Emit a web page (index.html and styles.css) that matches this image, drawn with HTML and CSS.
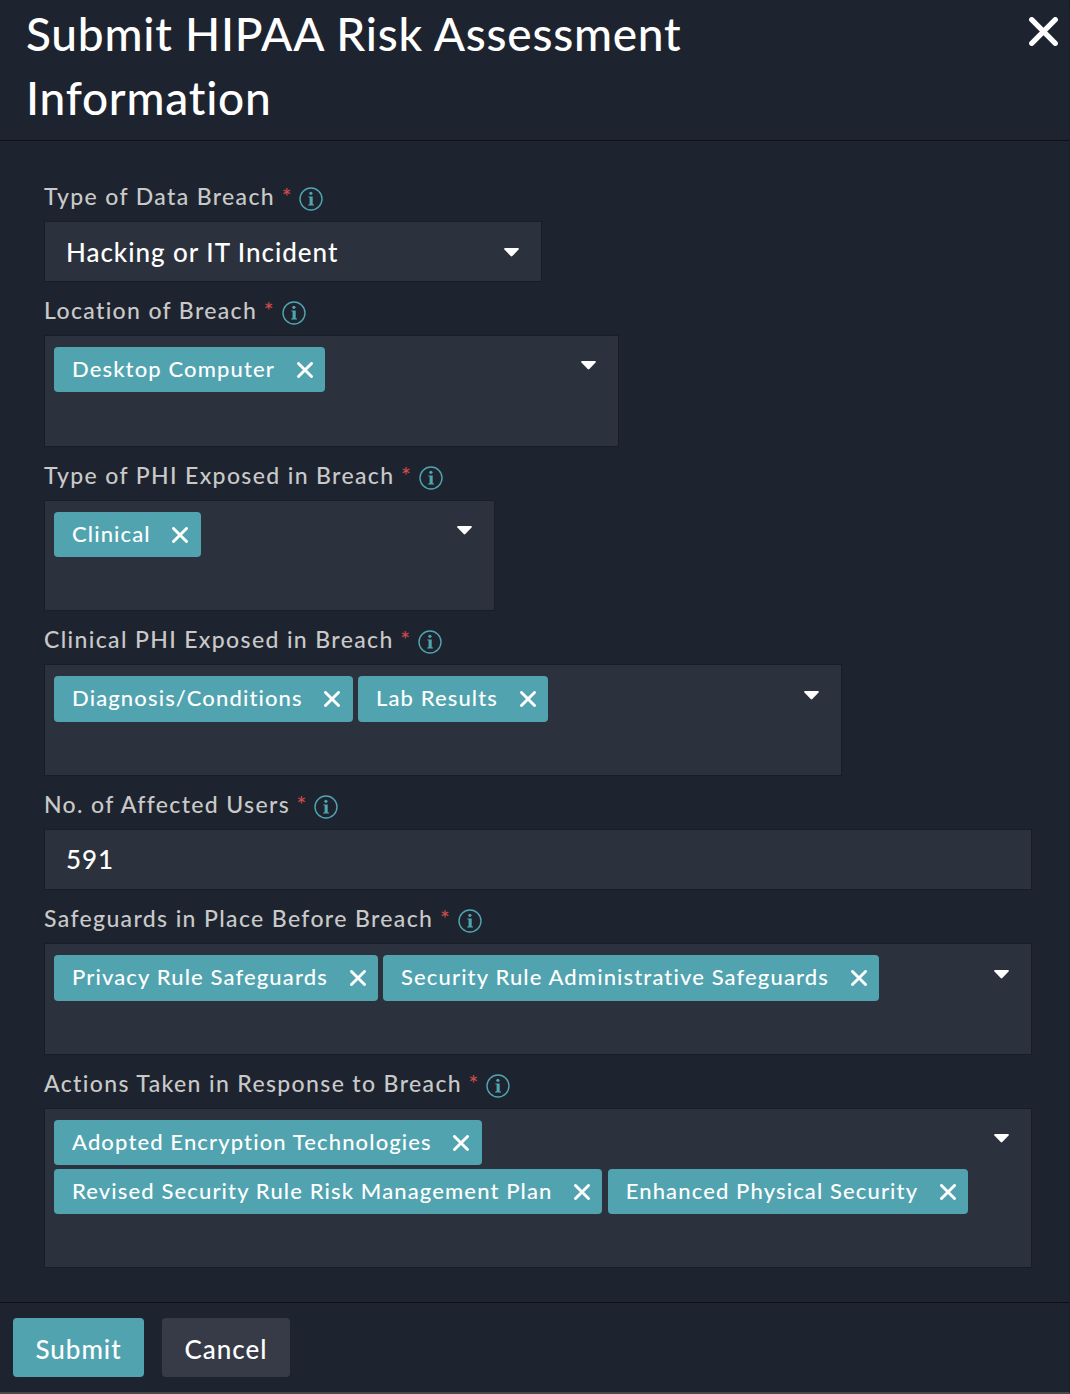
FILE: index.html
```html
<!DOCTYPE html>
<html lang="en">
<head>
<meta charset="utf-8">
<title>Submit HIPAA Risk Assessment Information</title>
<link rel="stylesheet" href="styles.css">
</head>
<body>
<svg class="sprite" aria-hidden="true">
  <symbol id="info" viewBox="0 0 24 24">
    <circle cx="12" cy="12" r="11" fill="none" stroke="currentColor" stroke-width="1.4"/>
    <circle cx="11.9" cy="6.3" r="1.6" fill="currentColor"/>
    <path fill="currentColor" d="M9.2 9.5h4.5v7.8l1.3.3v.8H9.2v-.8l1.4-.3v-6.7l-1.4-.3z"/>
  </symbol>
  <symbol id="cross" viewBox="0 0 16 16">
    <path d="M1.5 1.5 14.5 14.5M14.5 1.5 1.5 14.5" fill="none" stroke="currentColor" stroke-width="2.9" stroke-linecap="round"/>
  </symbol>
  <symbol id="caret" viewBox="0 0 15 9">
    <path fill="currentColor" d="M.8 0h13.4q1.2.6.4 1.5L8.3 8.1q-.8.8-1.6 0L.4 1.5Q-.4.6.8 0z"/>
  </symbol>
</svg>
<div class="dialog">
  <header class="header">
    <h1 class="title">Submit HIPAA Risk Assessment Information</h1>
    <svg class="close"><use href="#cross"/></svg>
  </header>
  <main class="form">
    <div class="field">
      <div class="label"><span>Type of Data Breach</span><span class="req">*</span><svg class="info"><use href="#info"/></svg></div>
      <div class="box single select w-breach"><span class="value">Hacking or IT Incident</span><svg class="caret"><use href="#caret"/></svg></div>
    </div>
    <div class="field">
      <div class="label"><span>Location of Breach</span><span class="req">*</span><svg class="info"><use href="#info"/></svg></div>
      <div class="box multi w-location">
        <div class="chips"><span class="chip">Desktop Computer<svg class="x"><use href="#cross"/></svg></span></div>
        <svg class="caret"><use href="#caret"/></svg>
      </div>
    </div>
    <div class="field">
      <div class="label"><span>Type of PHI Exposed in Breach</span><span class="req">*</span><svg class="info"><use href="#info"/></svg></div>
      <div class="box multi w-phi">
        <div class="chips"><span class="chip">Clinical<svg class="x"><use href="#cross"/></svg></span></div>
        <svg class="caret"><use href="#caret"/></svg>
      </div>
    </div>
    <div class="field">
      <div class="label"><span>Clinical PHI Exposed in Breach</span><span class="req">*</span><svg class="info"><use href="#info"/></svg></div>
      <div class="box multi w-clinical">
        <div class="chips"><span class="chip">Diagnosis/Conditions<svg class="x"><use href="#cross"/></svg></span><span class="chip">Lab Results<svg class="x"><use href="#cross"/></svg></span></div>
        <svg class="caret"><use href="#caret"/></svg>
      </div>
    </div>
    <div class="field">
      <div class="label"><span>No. of Affected Users</span><span class="req">*</span><svg class="info"><use href="#info"/></svg></div>
      <div class="box single"><span class="value">591</span></div>
    </div>
    <div class="field">
      <div class="label"><span>Safeguards in Place Before Breach</span><span class="req">*</span><svg class="info"><use href="#info"/></svg></div>
      <div class="box multi">
        <div class="chips"><span class="chip">Privacy Rule Safeguards<svg class="x"><use href="#cross"/></svg></span><span class="chip">Security Rule Administrative Safeguards<svg class="x"><use href="#cross"/></svg></span></div>
        <svg class="caret"><use href="#caret"/></svg>
      </div>
    </div>
    <div class="field">
      <div class="label"><span>Actions Taken in Response to Breach</span><span class="req">*</span><svg class="info"><use href="#info"/></svg></div>
      <div class="box multi tall">
        <div class="chips"><span class="chip">Adopted Encryption Technologies<svg class="x"><use href="#cross"/></svg></span><span class="chip">Revised Security Rule Risk Management Plan<svg class="x"><use href="#cross"/></svg></span><span class="chip">Enhanced Physical Security<svg class="x"><use href="#cross"/></svg></span></div>
        <svg class="caret"><use href="#caret"/></svg>
      </div>
    </div>
  </main>
  <footer class="footer">
    <button class="btn primary">Submit</button>
    <button class="btn">Cancel</button>
  </footer>
</div>
</body>
</html>
```
FILE: styles.css
```css
* { box-sizing: border-box; }
body {
  margin: 0;
  background: #1e242f;
  color: #fff;
  font-family: Lato, "Open Sans", sans-serif;
}
.sprite { display: none; }
svg { display: block; flex: none; }
.dialog {
  display: flex;
  flex-direction: column;
  height: 1394px;
  border-right: 1px dotted #161a22;
  border-bottom: 2px solid #48484b;
}
.header {
  display: flex;
  justify-content: space-between;
  align-items: flex-start;
  height: 141px;
  padding: 2px 11px 0 26px;
  border-bottom: 1px solid #0d1116;
}
.title {
  width: 700px;
  margin: 0;
  font-size: 46px;
  font-weight: 500;
  line-height: 64px;
  letter-spacing: .77px;
}
.close { width: 29px; height: 29px; margin-top: 15px; }
.form {
  flex: 1;
  padding: 26.9px 37px 0 44px;
}
.label {
  display: flex;
  align-items: flex-start;
  height: 53px;
  padding-top: 14px;
  color: #c9c9c9;
  font-size: 23px;
  font-weight: 500;
  line-height: 28px;
  letter-spacing: 1.36px;
}
.req { margin-left: 6.6px; color: #cf4a48; }
.info { width: 24px; height: 24px; margin: 4.8px 0 0 6.6px; color: #4fa5b0; }
.box {
  display: flex;
  justify-content: space-between;
  border: 1px solid #181d26;
  background: #2c323d;
}
.single { height: 61px; margin-bottom: .3px; align-items: center; padding: 0 22px .6px 21px; }
.select { padding-top: 2px; }
.multi { height: 111.6px; align-items: flex-start; padding: 10.8px 21.6px 0 9px; }
.tall { height: 160px; }
.w-breach { width: 498px; }
.w-location { width: 575px; }
.w-phi { width: 451px; }
.w-clinical { width: 798px; }
.value { font-size: 26px; font-weight: 500; letter-spacing: .97px; }
.caret { width: 15px; height: 9px; }
.multi .caret { margin-top: 14.5px; }
.chips { display: flex; flex-wrap: wrap; gap: 3.6px 5.3px; }
.chip {
  display: flex;
  align-items: center;
  height: 45.5px;
  padding: 0 12.2px 2px 18px;
  border-radius: 4px;
  background: #51a4af;
  font-size: 22px;
  font-weight: 500;
  letter-spacing: 1.13px;
}
.x { width: 16px; height: 16px; margin: 3px 0 0 21.7px; }
.footer {
  display: flex;
  gap: 18px;
  height: 90px;
  padding: 15px 13px;
  border-top: 1px solid #0d1116;
}
.btn {
  width: 128px;
  height: 59px;
  padding: 2px 0 0;
  border: 0;
  border-radius: 4px;
  background: #363b47;
  color: #fff;
  font: 500 26px Lato, sans-serif;
  letter-spacing: .97px;
}
.primary { width: 131px; background: #51a4af; }
```
